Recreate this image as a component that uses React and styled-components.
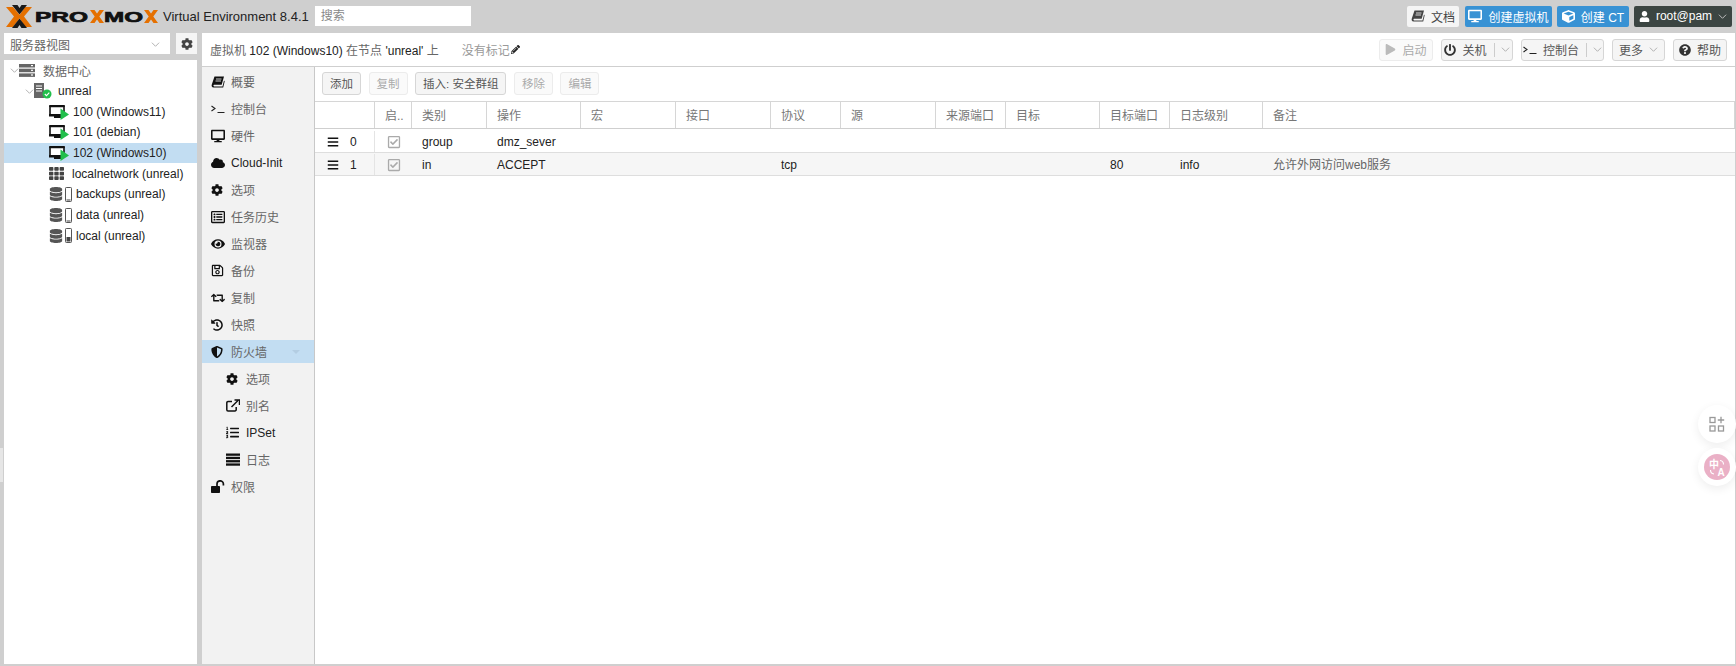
import React from 'react';
import styled, { createGlobalStyle } from 'styled-components';
import {
  FaDesktop, FaCube, FaUser, FaPlay, FaPowerOff, FaQuestionCircle, FaCog, FaCloud,
  FaRegListAlt, FaEye, FaRegSave, FaRetweet, FaHistory, FaShieldAlt, FaListOl,
  FaBars, FaRegCheckSquare, FaDatabase, FaPencilAlt, FaTh,
} from 'react-icons/fa';

const GlobalStyle = createGlobalStyle`
  html, body { margin: 0; height: 100%; overflow: hidden; background: #cfcfcf; }
  body {
    font-family: "Liberation Sans", "Noto Sans CJK SC", sans-serif;
    font-size: 12px;
    color: #222;
  }
  * { box-sizing: border-box; }
`;

const Page = styled.div`
  position: relative;
  height: 666px;
  padding-bottom: 2px;
  padding-right: 1px;
  display: flex;
  flex-direction: column;
`;

const TopBar = styled.div`
  height: 33px;
  display: flex;
  align-items: center;
  padding: 0 3px 1px 6px;
  flex: none;
`;

const Version = styled.div`
  font-size: 13px;
  margin-left: 2px;
  color: #222;
  white-space: nowrap;
`;

const Search = styled.div`
  width: 156px;
  height: 20px;
  margin-left: 6px;
  background: #fff;
  color: #888;
  padding: 0 6px;
  line-height: 20px;
`;

const Spacer = styled.div`
  flex: 1;
`;

const TopBtn = styled.div`
  height: 21px;
  width: ${(p) => p.$w}px;
  margin-left: ${(p) => p.$ml || 5}px;
  display: flex;
  align-items: center;
  justify-content: center;
  gap: 6px;
  border-radius: 2px;
  white-space: nowrap;
  background: ${(p) => (p.$kind === 'blue' ? '#3892d4' : p.$kind === 'dark' ? '#3b4542' : '#f5f5f5')};
  color: ${(p) => (p.$kind === 'blue' || p.$kind === 'dark' ? '#fff' : '#444')};
  svg { flex: none; }
`;

const Columns = styled.div`
  flex: 1;
  min-height: 0;
  display: flex;
`;

const Left = styled.div`
  width: 193px;
  margin-left: 4px;
  flex: none;
  display: flex;
  flex-direction: column;
  gap: 6px;
`;

const ViewRow = styled.div`
  height: 21px;
  display: flex;
  justify-content: space-between;
`;

const ViewSelect = styled.div`
  width: 166px;
  background: #fff;
  color: #666;
  display: flex;
  align-items: center;
  justify-content: space-between;
  padding: 1px 10px 0 6px;
`;

const GearBtn = styled.div`
  width: 21px;
  background: #f5f5f5;
  color: #444;
  display: flex;
  align-items: center;
  justify-content: center;
`;

const Tree = styled.div`
  flex: 1;
  background: #fff;
`;

const TreeRow = styled.div`
  height: 20.7px;
  display: flex;
  align-items: center;
  white-space: nowrap;
  padding-left: ${(p) => 5 + p.$depth * 15}px;
  background: ${(p) => (p.$selected ? '#c2ddf2' : 'transparent')};
`;

const Expander = styled.div`
  width: 10px;
  flex: none;
  display: flex;
  justify-content: flex-end;
`;

const TreeIcon = styled.div`
  width: ${(p) => p.$w || 24}px;
  flex: none;
  display: flex;
  align-items: center;
  color: #444;
`;

const Main = styled.div`
  flex: 1;
  min-width: 0;
  margin-left: 5px;
  display: flex;
  flex-direction: column;
  background: #fff;
`;

const Header = styled.div`
  height: 34px;
  flex: none;
  display: flex;
  align-items: center;
  padding: 0 8px 0 8px;
  border-bottom: 1px solid #cfcfcf;
`;

const Title = styled.div`
  font-size: 12px;
  white-space: nowrap;
`;

const Cjk = styled.span`
  color: #666;
`;

const Tags = styled.div`
  margin-left: 23px;
  color: #999;
  display: flex;
  align-items: center;
  gap: 1px;
  svg { color: #222; }
`;

const ActionBtn = styled.div`
  height: 22px;
  width: ${(p) => p.$w}px;
  margin-left: 8px;
  display: flex;
  align-items: center;
  justify-content: center;
  gap: 6px;
  background: ${(p) => (p.$off ? '#fafafa' : '#f5f5f5')};
  border: 1px solid ${(p) => (p.$off ? '#ececec' : '#d6d6d6')};
  border-radius: 3px;
  color: ${(p) => (p.$off ? '#aaa' : '#555')};
  white-space: nowrap;
`;

const Sep = styled.span`
  width: 1px;
  height: 14px;
  background: #ccc;
  margin-left: 1px;
`;

const Content = styled.div`
  flex: 1;
  min-height: 0;
  display: flex;
`;

const Menu = styled.div`
  width: 113px;
  flex: none;
  background: #f2f2f2;
  border-right: 1px solid #c8c8c8;
  padding-top: 3px;
`;

const MenuItem = styled.div`
  position: relative;
  height: 23px;
  margin-bottom: 4px;
  display: flex;
  align-items: center;
  color: ${(p) => (p.$latin ? '#222' : '#666')};
  padding-left: ${(p) => (p.$sub ? 24 : 9)}px;
  background: ${(p) => (p.$selected ? '#c2ddf2' : 'transparent')};
`;

const MenuIcon = styled.div`
  width: 20px;
  flex: none;
  display: flex;
  align-items: center;
  color: #111;
`;

const Caret = styled.div`
  position: absolute;
  left: 90px;
  top: 10px;
  border-left: 4px solid transparent;
  border-right: 4px solid transparent;
  border-top: 4px solid #b3cde2;
`;

const Panel = styled.div`
  flex: 1;
  min-width: 0;
  display: flex;
  flex-direction: column;
`;

const Toolbar = styled.div`
  height: 34px;
  flex: none;
  display: flex;
  align-items: center;
  gap: 7.5px;
  padding: 0 0 2px 7px;
`;

const ToolBtn = styled.div`
  height: 23px;
  padding: 0 7px;
  font-size: 11.5px;
  display: flex;
  align-items: center;
  background: ${(p) => (p.$off ? '#fafafa' : '#f5f5f5')};
  border: 1px solid ${(p) => (p.$off ? '#ececec' : '#d6d6d6')};
  border-radius: 3px;
  color: ${(p) => (p.$off ? '#aaa' : '#555')};
  white-space: nowrap;
`;

const cols = '60px 37px 75px 94px 95px 95px 70px 95px 70px 94px 70px 93px 1fr';

const GridHead = styled.div`
  height: 28px;
  flex: none;
  display: grid;
  grid-template-columns: ${cols};
  border-top: 1px solid #d6d6d6;
  border-bottom: 1px solid #cfcfcf;
`;

const HeadCell = styled.div`
  padding: 1px 0 0 10px;
  line-height: 26px;
  color: #777;
  border-right: 1px solid #d6d6d6;
  white-space: nowrap;
  overflow: hidden;
`;

const GridRow = styled.div`
  height: ${(p) => p.$h}px;
  padding-top: ${(p) => p.$pt}px;
  flex: none;
  display: grid;
  grid-template-columns: ${cols};
  align-items: center;
  background: ${(p) => (p.$alt ? '#f6f6f6' : '#fff')};
  border-bottom: 1px solid #dedede;
`;

const HandleCell = styled.div`
  height: 100%;
  display: flex;
  align-items: center;
  padding-left: 12px;
  gap: 11px;
  color: #222;
  border-right: 1px solid #e4e4e4;
  svg { color: #111; }
`;

const CheckCell = styled.div`
  display: flex;
  justify-content: center;
  color: #aaa;
`;

const Cell = styled.div`
  padding-left: 10px;
  line-height: 14px;
  height: 14px;
  white-space: nowrap;
`;

const Float = styled.div`
  position: absolute;
  right: 0;
  top: ${(p) => p.$top}px;
  width: 38px;
  height: 38px;
  border-radius: 50%;
  background: #fff;
  box-shadow: 0 3px 10px rgba(0, 0, 0, 0.07);
  display: flex;
  align-items: center;
  justify-content: center;
`;

const EdgeMark = styled.div`
  position: absolute;
  left: 0;
  top: 448px;
  width: 3px;
  height: 34px;
  background: #e6e6e6;
`;

const Chevron = ({ color = '#aaa', size = 9 }) => (
  <svg width={size} height={size} viewBox="0 0 10 10" fill="none" stroke={color} strokeWidth="1">
    <path d="M1 3l4 4 4-4" />
  </svg>
);

const Prompt = () => (
  <svg width="14" height="12" viewBox="0 0 14 12" fill="none" stroke="#222" strokeWidth="1.1">
    <path d="M0.5 3l3.500 2.500L0.500 8M6.500 9.500h7" />
  </svg>
);

const BookIcon = ({ color = '#111' }) => (
  <svg width="14" height="12" viewBox="0 0 14 12" fill={color}>
    <path d="M3.500 0.500H13l-2.300 8.300H3a1 1 0 0 0 0 1.700h8.500l1.500-6 .7.800-1.500 6.200H2.500C0.800 11.500.3 10 .8 8.500z" />
    <path d="M5 3h5.500M4.500 5h5.500" stroke="#fff" strokeWidth="0.8" />
  </svg>
);

const UnlockIcon = () => (
  <svg width="14" height="13" viewBox="0 0 14 13" fill="#111">
    <rect x="0" y="6" width="9" height="7" rx="0.800" />
    <path d="M6 6.500V4a3.200 3.200 0 0 1 6.400 0v1.500" fill="none" stroke="#111" strokeWidth="1.700" />
  </svg>
);

const LogIcon = () => (
  <svg width="14" height="13" viewBox="0 0 14 13" fill="#111">
    <rect y="0.500" width="14" height="2.300" />
    <rect y="3.800" width="14" height="2.300" />
    <rect y="7.100" width="14" height="2.300" />
    <rect y="10.400" width="14" height="2.300" />
  </svg>
);

const Logo = () => (
  <svg width="155" height="23" viewBox="0 0 155 23">
    <path d="M0 2h7l8 9.500L7 22H0l8-10.500z" fill="#e57000" />
    <path d="M26 2h-7l-6.500 9.500L19 22h7l-8-10.500z" fill="#e57000" />
    <path d="M6 0h5.500l2 3 2-3H21l-7.500 9.500zM6 23h5.500l2-3 2 3H21l-7.500-9.500z" fill="#1a1a1a" />
    <text x="29" y="17" fontFamily="Liberation Sans" fontWeight="700" fontSize="15" textLength="53" lengthAdjust="spacingAndGlyphs" stroke="#111" strokeWidth="0.7" fill="#111">PRO</text>
    <path d="M84 5h4.500l2.500 3.400L93.500 5H98l-4.700 6.500L98 18h-4.500L91 14.600 88.500 18H84l4.700-6.500z" fill="#e57000" />
    <text x="98" y="17" fontFamily="Liberation Sans" fontWeight="700" fontSize="15" textLength="39" lengthAdjust="spacingAndGlyphs" stroke="#111" strokeWidth="0.7" fill="#111">MO</text>
    <path d="M138 5h4.500l2.500 3.400L147.500 5H152l-4.700 6.500L152 18h-4.500L145 14.600 142.500 18H138l4.700-6.500z" fill="#e57000" />
  </svg>
);

const DatacenterIcon = () => (
  <svg width="16" height="13" viewBox="0 0 16 13" fill="#666">
    <rect y="0" width="16" height="3.500" />
    <rect y="4.700" width="16" height="3.500" />
    <rect y="9.400" width="16" height="3.500" />
    <rect x="12" y="1" width="2" height="1.200" fill="#fff" />
    <rect x="12" y="5.700" width="2" height="1.200" fill="#fff" />
    <rect x="12" y="10.400" width="2" height="1.200" fill="#fff" />
  </svg>
);

const NodeIcon = () => (
  <svg width="18" height="16" viewBox="0 0 18 16">
    <rect x="0" y="0" width="10" height="15" fill="#666" />
    <path d="M2 3h6M2 5.500h6M2 8h6" stroke="#fff" strokeWidth="1" />
    <circle cx="13" cy="11" r="4.500" fill="#21bf4b" />
    <path d="M10.800 11l1.700 1.700 2.800-3" stroke="#fff" strokeWidth="1.100" fill="none" />
  </svg>
);

const VmIcon = () => (
  <svg width="20" height="16" viewBox="0 0 20 16">
    <path d="M1 2.500h14v8.500H1z" fill="#fff" stroke="#111" strokeWidth="1.600" />
    <rect x="0" y="1" width="16" height="2" rx="1" fill="#111" />
    <rect x="0" y="10" width="16" height="2.500" fill="#111" />
    <rect x="5" y="12" width="8" height="2" fill="#111" />
    <path d="M11.500 4.500L20 10.500l-8.500 5.500z" fill="#21bf4b" />
  </svg>
);

const StorageIcon = ({ fill }) => (
  <TreeIcon $w={27}>
    <FaDatabase size={14} color="#555" />
    <svg width="7" height="15" viewBox="0 0 7 15" style={{ marginLeft: 2 }}>
      <rect x="0.500" y="0.500" width="6" height="14" rx="0.800" fill="#fff" stroke="#555" />
      <rect x="1.500" y={fill ? 9 : 12.500} width="4" height={fill ? 4.500 : 1} fill="#444" />
    </svg>
  </TreeIcon>
);

const ExternalIcon = () => (
  <svg width="14" height="13" viewBox="0 0 14 13" fill="none" stroke="#111" strokeWidth="1.500">
    <path d="M6 2.500H2a1.200 1.200 0 0 0-1.200 1.200v7a1.200 1.200 0 0 0 1.200 1.200h7a1.200 1.200 0 0 0 1.200-1.200V8" />
    <path d="M5.500 8L12 1.500M8.500 1h5v5" />
  </svg>
);

const AppsIcon = () => (
  <svg width="16" height="16" viewBox="0 0 16 16" fill="none" stroke="#999" strokeWidth="1.300">
    <rect x="1" y="1.500" width="5" height="5" />
    <rect x="1" y="10" width="5" height="5" />
    <rect x="9.500" y="10" width="5" height="5" />
    <path d="M12 0.800v6.400M8.800 4h6.400" />
  </svg>
);

const TranslateIcon = () => (
  <svg width="26" height="26" viewBox="0 0 26 26">
    <circle cx="13" cy="13" r="13" fill="#eab0c6" />
    <text x="5" y="14" fontSize="10" fontWeight="700" fontFamily="Noto Sans CJK SC" fill="#fff">中</text>
    <text x="13.500" y="22" fontSize="10" fontWeight="700" fontFamily="Liberation Sans" fill="#fff">A</text>
    <path d="M16 6.500a4 4 0 0 1 3.500 4M6.500 16a4 4 0 0 0 3.500 4" fill="none" stroke="#fff" strokeWidth="1.100" />
  </svg>
);

const menu = [
  { label: '概要', icon: <BookIcon /> },
  { label: '控制台', icon: <Prompt /> },
  { label: '硬件', icon: <FaDesktop size={14} /> },
  { label: 'Cloud-Init', icon: <FaCloud size={14} />, latin: true },
  { label: '选项', icon: <FaCog size={12} /> },
  { label: '任务历史', icon: <FaRegListAlt size={14} /> },
  { label: '监视器', icon: <FaEye size={14} /> },
  { label: '备份', icon: <FaRegSave size={13} /> },
  { label: '复制', icon: <FaRetweet size={14} /> },
  { label: '快照', icon: <FaHistory size={12} /> },
  { label: '防火墙', icon: <FaShieldAlt size={12} />, selected: true },
  { label: '选项', icon: <FaCog size={12} />, sub: true },
  { label: '别名', icon: <ExternalIcon />, sub: true },
  { label: 'IPSet', icon: <FaListOl size={13} />, sub: true, latin: true },
  { label: '日志', icon: <LogIcon />, sub: true },
  { label: '权限', icon: <UnlockIcon /> },
];

const heads = ['', '启..', '类别', '操作', '宏', '接口', '协议', '源', '来源端口', '目标', '目标端口', '日志级别', '备注'];

const rows = [
  { no: 0, type: 'group', action: 'dmz_sever', h: 24, pt: 2 },
  { no: 1, type: 'in', action: 'ACCEPT', proto: 'tcp', port: '80', level: 'info', note: '允许外网访问web服务', h: 23, pt: 1, alt: true },
];

export default function App() {
  return (
    <Page>
      <GlobalStyle />
      <TopBar>
        <Logo />
        <Version>Virtual Environment 8.4.1</Version>
        <Search>搜索</Search>
        <Spacer />
        <TopBtn $w={52}><BookIcon color="#444" />文档</TopBtn>
        <TopBtn $w={87} $kind="blue" $ml={6}><FaDesktop size={14} />创建虚拟机</TopBtn>
        <TopBtn $w={72} $kind="blue"><FaCube size={13} />创建 CT</TopBtn>
        <TopBtn $w={98} $kind="dark"><FaUser size={11} />root@pam<Chevron color="#ccc" /></TopBtn>
      </TopBar>
      <Columns>
        <Left>
          <ViewRow>
            <ViewSelect>服务器视图<Chevron /></ViewSelect>
            <GearBtn><FaCog size={12} /></GearBtn>
          </ViewRow>
          <Tree>
            <TreeRow $depth={0}>
              <Expander><Chevron /></Expander>
              <TreeIcon><DatacenterIcon /></TreeIcon>
              <Cjk>数据中心</Cjk>
            </TreeRow>
            <TreeRow $depth={1}>
              <Expander><Chevron /></Expander>
              <TreeIcon><NodeIcon /></TreeIcon>
              unreal
            </TreeRow>
            <TreeRow $depth={2}><Expander /><TreeIcon><VmIcon /></TreeIcon>100 (Windows11)</TreeRow>
            <TreeRow $depth={2}><Expander /><TreeIcon><VmIcon /></TreeIcon>101 (debian)</TreeRow>
            <TreeRow $depth={2} $selected><Expander /><TreeIcon><VmIcon /></TreeIcon>102 (Windows10)</TreeRow>
            <TreeRow $depth={2}><Expander /><TreeIcon $w={23}><FaTh size={15} color="#444" /></TreeIcon>localnetwork (unreal)</TreeRow>
            <TreeRow $depth={2}><Expander /><StorageIcon />backups (unreal)</TreeRow>
            <TreeRow $depth={2}><Expander /><StorageIcon />data (unreal)</TreeRow>
            <TreeRow $depth={2}><Expander /><StorageIcon fill />local (unreal)</TreeRow>
          </Tree>
        </Left>
        <Main>
          <Header>
            <Title><Cjk>虚拟机</Cjk> 102 (Windows10) <Cjk>在节点</Cjk> 'unreal' <Cjk>上</Cjk></Title>
            <Tags>没有标记<FaPencilAlt size={9} /></Tags>
            <Spacer />
            <ActionBtn $w={54} $off><FaPlay size={11} color="#bbb" />启动</ActionBtn>
            <ActionBtn $w={72}><FaPowerOff size={12} color="#333" />关机<Sep /><Chevron /></ActionBtn>
            <ActionBtn $w={83}><Prompt />控制台<Sep /><Chevron /></ActionBtn>
            <ActionBtn $w={53}>更多<Chevron /></ActionBtn>
            <ActionBtn $w={54}><FaQuestionCircle size={12} color="#333" />帮助</ActionBtn>
          </Header>
          <Content>
            <Menu>
              {menu.map((m, i) => (
                <MenuItem key={i} $sub={m.sub} $selected={m.selected} $latin={m.latin}>
                  <MenuIcon>{m.icon}</MenuIcon>
                  <span>{m.label}</span>
                  {m.selected && <Caret />}
                </MenuItem>
              ))}
            </Menu>
            <Panel>
              <Toolbar>
                <ToolBtn>添加</ToolBtn>
                <ToolBtn $off>复制</ToolBtn>
                <ToolBtn>插入: 安全群组</ToolBtn>
                <ToolBtn $off>移除</ToolBtn>
                <ToolBtn $off>编辑</ToolBtn>
              </Toolbar>
              <GridHead>
                {heads.map((h, i) => <HeadCell key={i}>{h}</HeadCell>)}
              </GridHead>
              {rows.map((r) => (
                <GridRow key={r.no} $h={r.h} $pt={r.pt} $alt={r.alt}>
                  <HandleCell><FaBars size={12} />{r.no}</HandleCell>
                  <CheckCell><FaRegCheckSquare size={14} /></CheckCell>
                  <Cell>{r.type}</Cell>
                  <Cell>{r.action}</Cell>
                  <Cell />
                  <Cell />
                  <Cell>{r.proto}</Cell>
                  <Cell />
                  <Cell />
                  <Cell />
                  <Cell>{r.port}</Cell>
                  <Cell>{r.level}</Cell>
                  <Cell><Cjk>{r.note}</Cjk></Cell>
                </GridRow>
              ))}
            </Panel>
          </Content>
        </Main>
      </Columns>
      <EdgeMark />
      <Float $top={405}><AppsIcon /></Float>
      <Float $top={448}><TranslateIcon /></Float>
    </Page>
  );
}
